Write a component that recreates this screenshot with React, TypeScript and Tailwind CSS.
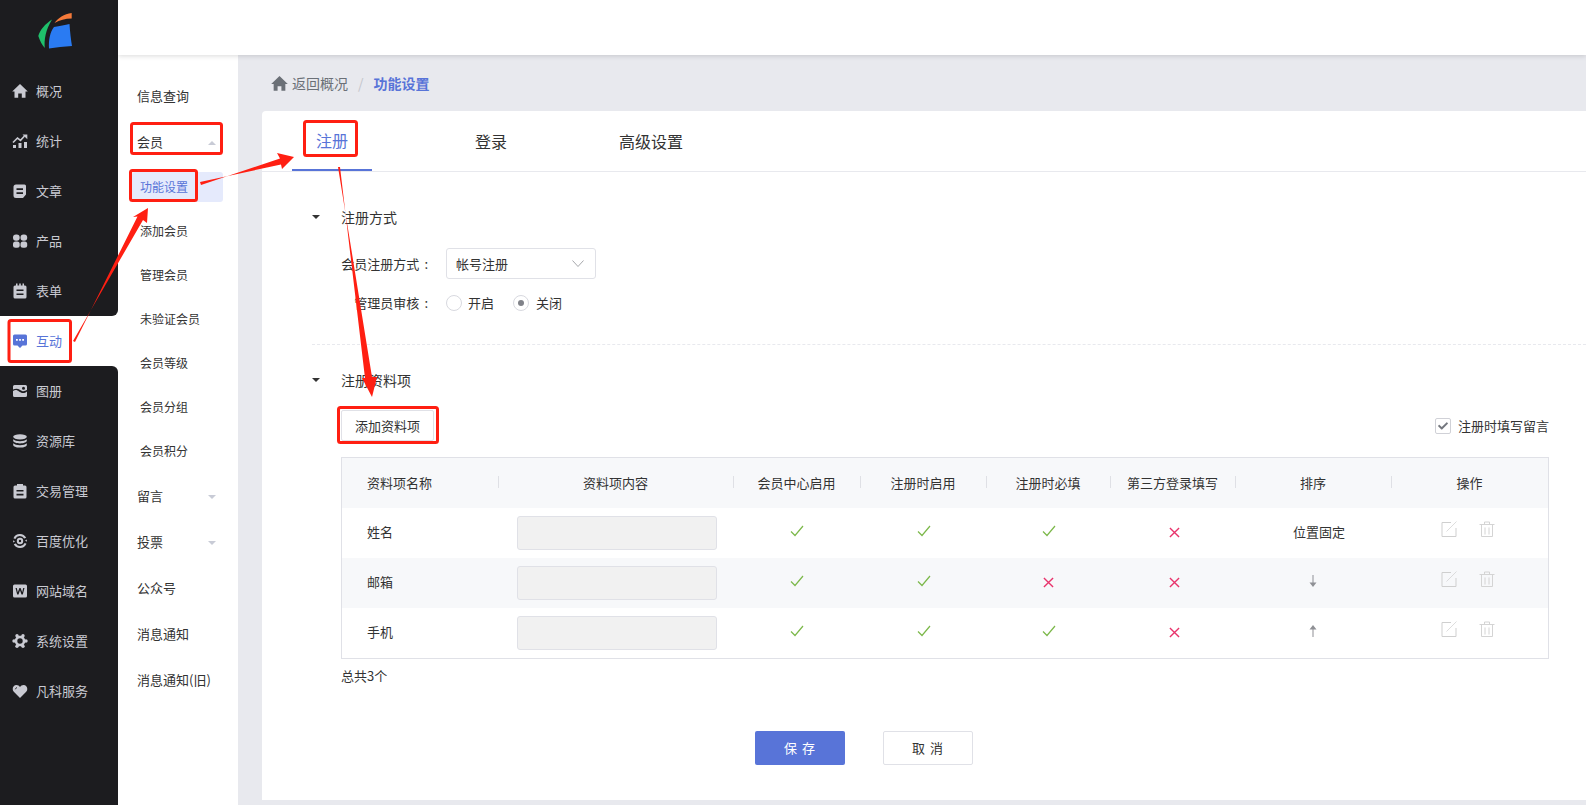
import type { ReactNode } from 'react';
import { FaCheck } from 'react-icons/fa';

const Svg = ({ children }: { children: ReactNode }) => (
  <svg viewBox="0 0 16 16" className="w-4 h-4" fill="currentColor">
    {children}
  </svg>
);

const homePath = 'M8 1 15.800 8.500H13.500V14.800H9.800V10.500H6.200V14.800H2.500V8.500H.2z';

const icons: Record<string, ReactNode> = {
  home: (
    <Svg>
      <path d={homePath} />
    </Svg>
  ),
  stat: (
    <Svg>
      <path d="M1 12h3v3H1zM6.500 10h3v5h-3zM12 9h3v6h-3z" />
      <path d="M1 9.500 5.500 5 8.500 7.300 12.500 3" fill="none" stroke="currentColor" strokeWidth="1.600" />
      <path d="M10.500 1.500h4.800v4.800z" />
    </Svg>
  ),
  doc: (
    <Svg>
      <path fillRule="evenodd" d="M4 1.500h8.500A1.500 1.500 0 0 1 14 3v8.500L11 15H4a2.500 2.500 0 0 1-2.500-2.500V4A2.500 2.500 0 0 1 4 1.500zM4.500 5.200v1.800h6.500V5.200zM4.500 9.200V11h6.500V9.200z" />
    </Svg>
  ),
  grid: (
    <Svg>
      <rect x="1" y="1.500" width="6.700" height="6.200" rx="3" />
      <rect x="8.500" y="1.500" width="6.700" height="6.200" rx="3" />
      <rect x="1" y="8.500" width="6.700" height="6.200" rx="2.500" />
      <rect x="8.500" y="8.500" width="6.700" height="6.200" rx="2.500" />
    </Svg>
  ),
  form: (
    <Svg>
      <path fillRule="evenodd" d="M4 0.500h1.500v2h1.700v-2h1.600v2h1.700v-2H12v2h1A1.500 1.500 0 0 1 14.500 4v10a1.500 1.500 0 0 1-1.500 1.500H3A1.500 1.500 0 0 1 1.500 14V4A1.500 1.500 0 0 1 3 2.500h1zM4.500 6.500v1.600h7V6.500zM4.500 10.500v1.600h7v-1.600z" />
    </Svg>
  ),
  chat: (
    <Svg>
      <path fillRule="evenodd" d="M2.500 1.500h11A1.500 1.500 0 0 1 15 3v8a1.500 1.500 0 0 1-1.500 1.500H10.500L8 15l-2.500-2.500h-3A1.500 1.500 0 0 1 1 11V3a1.500 1.500 0 0 1 1.500-1.500zM4 6v1.800h1.800V6zM7.100 6v1.800h1.800V6zM10.200 6v1.800H12V6z" />
    </Svg>
  ),
  album: (
    <Svg>
      <path fillRule="evenodd" d="M2.500 2h11A1.500 1.500 0 0 1 15 3.500v9a1.500 1.500 0 0 1-1.500 1.500h-11A1.500 1.500 0 0 1 1 12.500v-9A1.500 1.500 0 0 1 2.500 2zM1 8c2.500-1.500 4-1 6 .5s5 2.500 8 0v-1.700c-3 2.200-5 1.500-6.800.2C6 5.500 3.500 5.500 1 6.500zM11.500 3.700a1.500 1.500 0 1 0 0 3 1.500 1.500 0 0 0 0-3z" />
    </Svg>
  ),
  db: (
    <Svg>
      <ellipse cx="8" cy="3.800" rx="6.800" ry="2.600" />
      <path d="M1.200 6.200v1.600c0 1.400 3 2.600 6.800 2.600s6.800-1.200 6.800-2.600V6.200c-1.200 1.300-3.800 2-6.800 2s-5.600-.7-6.800-2z" />
      <path d="M1.200 10.300v1.600c0 1.400 3 2.600 6.800 2.600s6.800-1.200 6.800-2.600v-1.600c-1.200 1.300-3.800 2-6.800 2s-5.600-.7-6.800-2z" />
    </Svg>
  ),
  clip: (
    <Svg>
      <path fillRule="evenodd" d="M5 1h6v1.500h2A1.500 1.500 0 0 1 14.500 4v10a1.500 1.500 0 0 1-1.500 1.500H3A1.500 1.500 0 0 1 1.500 14V4A1.500 1.500 0 0 1 3 2.500h2zM4.500 7v1.600h7V7zM4.500 10.800v1.600h7v-1.600z" />
    </Svg>
  ),
  seo: (
    <Svg>
      <path d="M8 1a7 7 0 0 1 6.200 3.800l-2 .8A5 5 0 0 0 3.300 6L1.500 5.200A7 7 0 0 1 8 1zM1.800 11.200l2-.8a5 5 0 0 0 8.900-.4l1.800.8A7 7 0 0 1 8 15a7 7 0 0 1-6.200-3.800z" />
      <path d="M1.300 7.200 3 8.500 1 9.500zM14.700 8.800 13 7.500l2-1z" />
      <path fillRule="evenodd" d="M8 4.800a3.200 3.200 0 1 0 0 6.400 3.200 3.200 0 0 0 0-6.400zM8 6.800a1.200 1.200 0 1 1 0 2.400 1.200 1.200 0 0 1 0-2.400z" />
    </Svg>
  ),
  web: (
    <Svg>
      <path fillRule="evenodd" d="M2.500 1.500h11A1.500 1.500 0 0 1 15 3v10a1.500 1.500 0 0 1-1.500 1.500h-11A1.500 1.500 0 0 1 1 13V3a1.500 1.500 0 0 1 1.500-1.500zM3.500 5l1.700 6.500h1.300L8 7.300l1.500 4.200h1.300L12.500 5h-1.300l-1 4.300L8.600 5H7.400L5.800 9.300 4.800 5z" />
    </Svg>
  ),
  gear: (
    <Svg>
      <path fillRule="evenodd" d="M2 8 5 2.800H11L14 8 11 13.200H5zM8 5.300a2.700 2.700 0 1 0 0 5.400 2.700 2.700 0 0 0 0-5.400z" />
      <circle cx="2" cy="8" r="1.700" />
      <circle cx="14" cy="8" r="1.700" />
      <circle cx="5" cy="2.800" r="1.700" />
      <circle cx="11" cy="2.800" r="1.700" />
      <circle cx="5" cy="13.200" r="1.700" />
      <circle cx="11" cy="13.200" r="1.700" />
    </Svg>
  ),
  heart: (
    <Svg>
      <path d="M8 15 1.800 8.800C-.5 6.300 1 2 4.500 2 6 2 7.200 2.800 8 4 8.800 2.800 10 2 11.500 2 15 2 16.500 6.300 14.200 8.800z" />
      <path d="M3.300 6.300C3.500 5.300 4.200 4.700 5 4.500" fill="none" stroke="#1c1c1f" strokeWidth="0.800" />
    </Svg>
  ),
};

const topNav = [
  ['home', '概况'],
  ['stat', '统计'],
  ['doc', '文章'],
  ['grid', '产品'],
  ['form', '表单'],
];
const bottomNav = [
  ['album', '图册'],
  ['db', '资源库'],
  ['clip', '交易管理'],
  ['seo', '百度优化'],
  ['web', '网站域名'],
  ['gear', '系统设置'],
  ['heart', '凡科服务'],
];

function NavItem({ icon, label }: { icon: string; label: string }) {
  return (
    <div className="h-[50px] flex items-center pl-3 text-[#c9cad2] text-[13px]">
      <span className="w-6 flex items-center">{icons[icon]}</span>
      <span>{label}</span>
    </div>
  );
}

function SubParent({ label, arrow }: { label: string; arrow?: 'up' | 'down' }) {
  return (
    <div className="h-[46px] flex items-center pl-[19px] pr-[22px] pb-[1px] justify-between text-[13px] text-[#333]">
      <span>{label}</span>
      {arrow === 'up' && <span className="w-0 h-0 mt-[2px] border-x-4 border-x-transparent border-b-4 border-b-[#c8cbd6]" />}
      {arrow === 'down' && <span className="w-0 h-0 mt-[2px] border-x-4 border-x-transparent border-t-4 border-t-[#c8cbd6]" />}
    </div>
  );
}

function SubChild({ label }: { label: string }) {
  return <div className="h-11 flex items-center pl-[22px] text-xs text-[#333]">{label}</div>;
}

const Check = () => (
  <svg viewBox="0 0 14 12" className="w-[14px] h-3 ml-px -mt-1 text-[#7cb84a]" fill="none" stroke="currentColor" strokeWidth="1.200">
    <path d="M1 6.500 5 10.500 13 1" />
  </svg>
);

const Cross = ({ shift }: { shift?: boolean }) => (
  <svg viewBox="0 0 12 12" className={shift ? 'w-[11px] h-[11px] ml-[3px] -mt-px text-[#e8336b]' : 'w-[11px] h-[11px] ml-px -mt-px text-[#e8336b]'} fill="none" stroke="currentColor" strokeWidth="1.500">
    <path d="M1 1 11 11M11 1 1 11" />
  </svg>
);

const Edit = () => (
  <svg viewBox="0 0 16 16" className="w-4 h-4 text-[#cfcfcf]" fill="none" stroke="currentColor">
    <path d="M10 1.500H1v14h14V7" />
    <path d="M5.500 10.500 15.500.5" strokeWidth="0.700" />
  </svg>
);

const Trash = () => (
  <svg viewBox="0 0 16 16" className="w-4 h-4 text-[#cfcfcf]" fill="none" stroke="currentColor">
    <path d="M0.500 3.500h15M5.500 3V1h5v2M2.500 4v11.500h11V4M6 6.500v7M10 6.500v7" strokeWidth="0.900" />
  </svg>
);

const ArrowV = ({ up }: { up?: boolean }) => (
  <svg viewBox="0 0 8 12" className={up ? 'w-2 h-3 -mt-[5px] text-[#8f9095]' : 'w-2 h-3 -mt-[5px] rotate-180 text-[#8f9095]'} fill="currentColor">
    <path d="M4 0 7.500 4.500H4.500V12H3.500V4.500H.5z" />
  </svg>
);

const headers = ['资料项名称', '资料项内容', '会员中心启用', '注册时启用', '注册时必填', '第三方登录填写', '排序', '操作'];

const rows = [
  { name: '姓名', a: true, b: true, c: true, order: 'fixed', alt: false },
  { name: '邮箱', a: true, b: true, c: false, order: 'down', alt: true },
  { name: '手机', a: true, b: true, c: true, order: 'up', alt: false },
];

const cols = 'grid grid-cols-[156px_235px_127px_126px_124px_125px_156px_157px]';

export default function App() {
  return (
    <div className="relative w-[1586px] h-[805px] overflow-hidden flex bg-white font-['Noto_Sans_CJK_SC',sans-serif] text-[#333]">
      {/* left dark nav */}
      <aside className="w-[118px] flex flex-col shrink-0">
        <div className="bg-[#1c1c1f] rounded-br-md">
          <div className="h-[66px] flex items-start">
            <svg viewBox="36 11 38 40" className="w-[38px] h-10 ml-9 mt-[11px]">
              <path d="M52 19.500C45 24 40 30 38.300 36 40 41 42 45 44.800 48 44 40 45.500 30 52 19.500z" fill="#1fc06b" />
              <path d="M54.500 23C58 18 64 14 71.700 13L71.700 18.500C65 18.500 60 20 54.500 23z" fill="#f57a3a" />
              <path d="M49 48.500C48.500 40 50 32 54 27 60 26 65 25 69.500 24 70 32 71 40 72 46 64 46.500 56 47.500 49 48.500z" fill="#2a7bf2" />
            </svg>
          </div>
          {topNav.map(([i, l]) => (
            <NavItem key={l} icon={i} label={l} />
          ))}
        </div>
        <div className="h-[50px] flex items-center pl-3 text-[#5874d8] text-[13px]">
          <span className="w-6 flex items-center">{icons.chat}</span>
          <span>互动</span>
        </div>
        <div className="flex-1 bg-[#1c1c1f] rounded-tr-md">
          {bottomNav.map(([i, l]) => (
            <NavItem key={l} icon={i} label={l} />
          ))}
        </div>
      </aside>

      <div className="flex-1 flex flex-col min-w-0">
        <header className="relative z-10 h-[55px] bg-white shadow-[0_1px_5px_rgba(0,0,0,0.15)]" />
        <div className="flex-1 flex min-h-0">
          {/* sub menu */}
          <nav className="w-[120px] shrink-0 pt-[18px] bg-white">
            <SubParent label="信息查询" />
            <SubParent label="会员" arrow="up" />
            <div className="h-11 flex items-center">
              <div className="ml-[14px] w-[91px] h-[30px] flex items-center pl-2 rounded-[3px] bg-[#e5eafc] text-xs text-[#5874d8]">功能设置</div>
            </div>
            <SubChild label="添加会员" />
            <SubChild label="管理会员" />
            <SubChild label="未验证会员" />
            <SubChild label="会员等级" />
            <SubChild label="会员分组" />
            <SubChild label="会员积分" />
            <SubParent label="留言" arrow="down" />
            <SubParent label="投票" arrow="down" />
            <SubParent label="公众号" />
            <SubParent label="消息通知" />
            <SubParent label="消息通知(旧)" />
          </nav>

          <main className="flex-1 flex flex-col min-w-0 bg-[#e8e9ee] pl-6 pb-[5px]">
            <div className="h-[56px] shrink-0 flex items-center pb-[1px] text-sm">
              <span className="ml-[9px] mr-[4px] text-[#6b7077]">
                <svg viewBox="0 0 16 16" className="w-[17px] h-[17px] mt-[2px]" fill="currentColor">
                  <path d={homePath} />
                </svg>
              </span>
              <span className="text-[#6b7077]">返回概况</span>
              <span className="mx-[10px] text-[#c4c6cc]">/</span>
              <span className="font-bold text-[#5874d8]">功能设置</span>
            </div>

            <section className="flex-1 bg-white rounded-tl-sm">
              <div className="flex h-[61px] pl-[30px] border-b border-[#e8e9ee] text-base">
                <div className="w-20 h-[60px] flex items-center justify-center pb-[1px] border-b-2 border-[#5874d8] text-[#5874d8]">注册</div>
                <div className="ml-[79px] w-20 h-[60px] flex items-center justify-center pb-[1px]">登录</div>
                <div className="ml-[64px] w-28 h-[60px] flex items-center justify-center pb-[1px]">高级设置</div>
              </div>

              <div className="pl-[50px] text-[13px]">
                <div className="mt-[35px] h-5 flex items-center text-sm">
                  <span className="w-0 h-0 border-x-4 border-x-transparent border-t-4 border-t-[#333]" />
                  <span className="ml-[21px]">注册方式</span>
                </div>

                <div className="mt-[21px] flex items-center">
                  <span className="w-[116px] text-right">
                    会员注册方式<span className="ml-[5px]">:</span>
                  </span>
                  <div className="ml-[18px] w-[150px] h-[31px] flex items-center justify-between pl-[9px] pr-[11px] rounded-[3px] border border-[#e0e1e7]">
                    <span>帐号注册</span>
                    <svg viewBox="0 0 12 7" className="w-3 h-[7px] text-[#8f9095]" fill="none" stroke="currentColor" strokeWidth="0.800">
                      <path d="M.5 .5 6 6.500 11.500 .5" />
                    </svg>
                  </div>
                </div>

                <div className="mt-3 h-6 flex items-center">
                  <span className="w-[116px] text-right">
                    管理员审核<span className="ml-[5px]">:</span>
                  </span>
                  <span className="ml-[18px] w-4 h-4 rounded-full border border-[#d8d9df]" />
                  <span className="ml-[6px]">开启</span>
                  <span className="ml-[19px] w-4 h-4 rounded-full border border-[#d8d9df] flex items-center justify-center">
                    <span className="w-[6px] h-[6px] rounded-full bg-[#808289]" />
                  </span>
                  <span className="ml-[7px]">关闭</span>
                </div>

                <div className="mt-[29px] border-t border-dashed border-[#e8e9ee]" />

                <div className="mt-[25px] h-5 flex items-center text-sm">
                  <span className="w-0 h-0 border-x-4 border-x-transparent border-t-4 border-t-[#333]" />
                  <span className="ml-[21px]">注册资料项</span>
                </div>

                <div className="ml-[29px] w-[1208px]">
                  <div className="mt-5 flex items-center justify-between">
                    <button className="w-[93px] h-[31px] rounded-[2px] border border-[#e0e1e7] bg-white">添加资料项</button>
                    <label className="flex items-center">
                      <span className="w-4 h-4 rounded-[2px] border border-[#d0d1d7] flex items-center justify-center">
                        <FaCheck className="w-[10px] h-[10px] text-[#74777e]" />
                      </span>
                      <span className="ml-[7px]">注册时填写留言</span>
                    </label>
                  </div>

                  <div className="mt-4 border border-[#e0e1e7]">
                    <div className={`${cols} h-[50px] bg-[#f7f8fa]`}>
                      {headers.map((h, i) => (
                        <div key={h} className={i === 0 ? 'flex items-center pl-[25px] relative' : 'flex items-center justify-center relative'}>
                          {h}
                          {i < 7 && <span className="absolute -right-px top-[18px] w-px h-3 bg-[#dfe0e5]" />}
                        </div>
                      ))}
                    </div>
                    {rows.map((r) => (
                      <div key={r.name} className={`${cols} h-[50px] ${r.alt ? 'bg-[#f7f8fa]' : 'bg-white'}`}>
                        <div className="flex items-center pl-[25px] pb-[2px]">{r.name}</div>
                        <div className="flex items-center pl-[19px]">
                          <div className="w-[200px] h-[34px] rounded-[3px] border border-[#e0e1e7] bg-[#f1f1f1]" />
                        </div>
                        <div className="flex items-center justify-center">{r.a ? <Check /> : <Cross />}</div>
                        <div className="flex items-center justify-center">{r.b ? <Check /> : <Cross />}</div>
                        <div className="flex items-center justify-center">{r.c ? <Check /> : <Cross />}</div>
                        <div className="flex items-center justify-center"><Cross shift /></div>
                        <div className="flex items-center justify-center">
                          {r.order === 'fixed' && <span className="pl-3 pb-[2px]">位置固定</span>}
                          {r.order === 'down' && <ArrowV />}
                          {r.order === 'up' && <ArrowV up />}
                        </div>
                        <div className="flex items-start pt-[13px] pl-[50px] gap-[22px]">
                          <Edit />
                          <Trash />
                        </div>
                      </div>
                    ))}
                  </div>

                  <div className="mt-[7px] h-5 flex items-center">总共3个</div>

                  <div className="mt-[45px] flex gap-[38px] pl-[414px]">
                    <button className="w-[90px] h-[34px] rounded-[2px] bg-[#5874d8] text-white tracking-[1px]">保 存</button>
                    <button className="w-[90px] h-[34px] rounded-[2px] border border-[#e0e1e7] bg-white tracking-[1px]">取 消</button>
                  </div>
                </div>
              </div>
            </section>
          </main>
        </div>
      </div>

      {/* red annotations drawn on top of the screenshot */}
      <svg viewBox="0 0 1586 805" className="absolute inset-0 w-[1586px] h-[805px] pointer-events-none z-20" fill="none" stroke="#ff1f12" strokeWidth="3">
        <rect x="9" y="320.500" width="61.500" height="41" rx="2" />
        <rect x="131.500" y="123.500" width="90" height="30" rx="2" />
        <rect x="130.500" y="170.500" width="66" height="30" rx="2" />
        <rect x="304.500" y="121.500" width="52" height="34" rx="2" />
        <rect x="338.500" y="407.500" width="99" height="35" rx="2" />
        <g stroke="none" fill="#ff1f12">
          <polygon points="73,341 75,342 137.500,216.500 133,217 148,208 147,223 143,220" />
          <polygon points="200,182 201,185 280,158.500 277,153 294,157 282,169 281,164.500" />
          <polygon points="338,167 340,167 365,378 362,378 372,397 377,377 372,377" />
        </g>
      </svg>
    </div>
  );
}
